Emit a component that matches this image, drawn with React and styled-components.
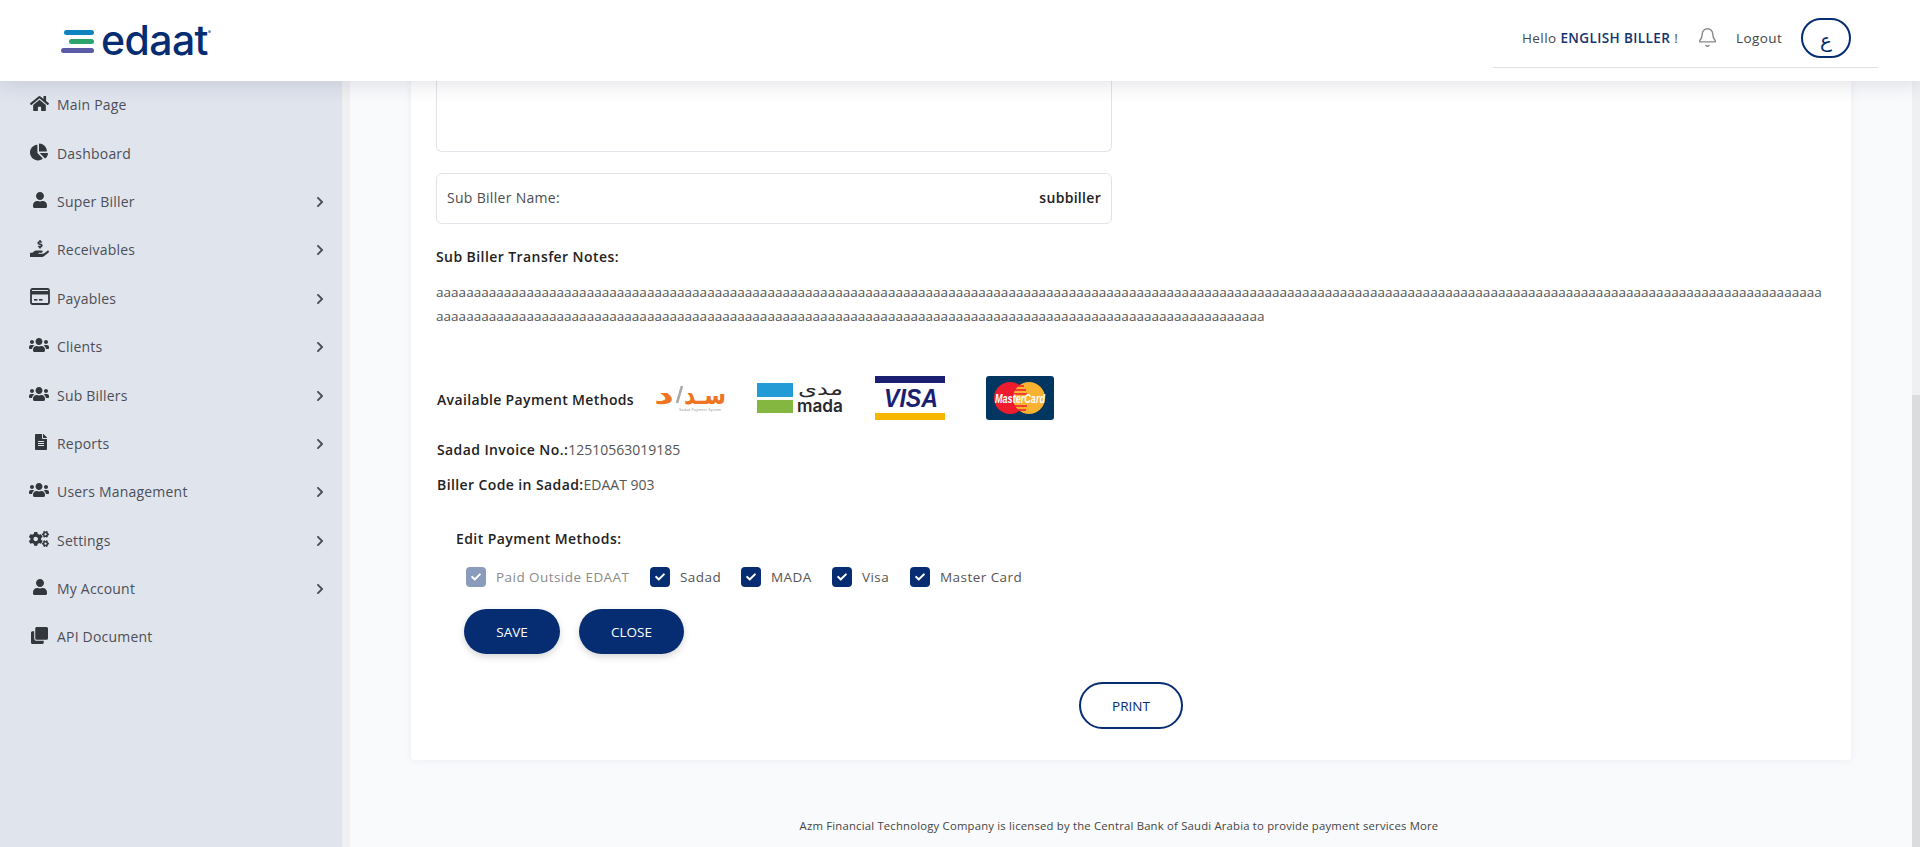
import React from "react";
import styled, { createGlobalStyle } from "styled-components";
import {
  FaHome, FaChartPie, FaUser, FaHandHoldingUsd, FaUsers, FaFileAlt, FaCogs, FaClone, FaChevronRight, FaCheck,
} from "react-icons/fa";
import { Bell } from "lucide-react";

const NAVY = "#062d72";
const FONT = '"Open Sans", "Noto Sans", sans-serif';

const Global = createGlobalStyle`
  html, body { margin: 0; padding: 0; overflow: hidden; background: #f9fafc; }
  * { box-sizing: border-box; }
  body { font-family: ${FONT}; font-size: 13.5px; color: #444; }
`;

const Page = styled.div`display: flex; flex-direction: column; width: 1920px; height: 847px; overflow: hidden;`;

const Header = styled.header`
  position: relative; z-index: 2; flex: 0 0 81px; height: 81px; background: #fff;
  box-shadow: 0 4px 18px rgba(40, 50, 80, 0.13);
  display: flex; justify-content: space-between;
`;
const LogoWrap = styled.div`display: flex; align-items: center; padding-left: 61px; height: 81px; gap: 4px; padding-bottom: 1px;`;
const LogoBars = styled.svg`width: 36px; height: 24px; display: block; margin-top: 3px;`;
const LogoWord = styled.span`
  font-family: "Inter", sans-serif; font-size: 41px; font-weight: 500; color: ${NAVY};
  line-height: 1; letter-spacing: -0.6px; position: relative;
`;
const Reg = styled.i`position: absolute; right: -3px; top: 10px; width: 3px; height: 3px; border-radius: 50%; background: #7a8fb5;`;
const UserBar = styled.div`
  width: 385px; height: 68px; margin-right: 42px; border-bottom: 1px solid #dedfe3;
  display: flex; align-items: center; padding-left: 29px; padding-top: 8px;
`;
const Hello = styled.span`color: #4a4a4a; letter-spacing: 0.4px; width: 176px; white-space: nowrap;`;
const HelloName = styled.b`color: #14336f; font-weight: 600;`;
const BellIcon = styled(Bell)`color: #888; margin-left: -1px; flex: none;`;
const LogoutLink = styled.span`margin-left: 18px; width: 48px; color: #444; letter-spacing: 0.4px;`;
const LangButton = styled.button`
  margin-left: 17px; width: 50px; height: 40px; border-radius: 20px; border: 2px solid ${NAVY};
  background: #fff; color: ${NAVY}; font-family: "DejaVu Sans", sans-serif; font-size: 20px; line-height: 1; padding: 4px 0 0; flex: none;
`;

const Body = styled.div`flex: 1; display: flex; min-height: 0;`;
const Sidebar = styled.nav`flex: 0 0 342px; background: #e0e4ed;`;
const SideRow = styled.div`
  height: 48.4px; display: flex; align-items: center; padding: 0 16px 0 30px; color: #4c4f57;
`;
const SideIcon = styled.span`
  flex: 0 0 27px; display: flex; justify-content: flex-start; font-size: ${(p) => p.$size || 19}px; color: #33363d;
  margin-top: -4px; svg { display: block; margin-left: ${(p) => p.$shift || 0}px; }
`;
const SideLabel = styled.span`flex: 1; letter-spacing: 0.2px; font-size: 14px; margin-top: -1px;`;
const SideChevron = styled(FaChevronRight)`font-size: 12px; color: #4c4f57;`;
const Track = styled.div`flex: 0 0 8px; background: #f0f0f2;`;
const MainTrack = styled(Track)`padding-top: 314px;`;
const Thumb = styled.div`height: 100%; background: #dcdcdc;`;

const Main = styled.main`flex: 1; display: flex; flex-direction: column; padding: 0 61px; background: #f9fafc; min-width: 0;`;
const Card = styled.section`
  height: 679px; background: #fff; border-radius: 0 0 4px 4px; padding: 0 25px;
  box-shadow: 0 0 8px rgba(60, 70, 100, 0.07);
`;
const EmptyBox = styled.div`width: 676px; height: 71px; border: 1px solid #e2e3e8; border-top: 0; border-radius: 0 0 6px 6px;`;
const NameBox = styled.div`
  width: 676px; height: 51px; margin-top: 21px; border: 1px solid #e2e3e8; border-radius: 6px;
  display: flex; justify-content: space-between; align-items: center; padding: 0 10px 2px;
`;
const NameLabel = styled.span`color: #4d4d4d; letter-spacing: 0.3px; font-size: 14px;`;
const NameValue = styled.b`color: #222; font-weight: 600; font-size: 14px; letter-spacing: 0.3px;`;
const Title = styled.div`height: 24px; line-height: 24px; margin-top: ${(p) => p.$top}px; padding-left: ${(p) => p.$left || 0}px; color: #222; font-weight: 600; font-size: 14px; letter-spacing: 0.42px;`;
const Notes = styled.p`margin: 11px 0 0; line-height: 24px; word-break: break-all; color: #555; letter-spacing: 0.03px;`;
const PayRow = styled.div`display: flex; align-items: center; height: 44px; margin-top: 48px; padding-left: 1px;`;
const PayLabel = styled.span`flex: 0 0 217px; color: #222; font-weight: 600; font-size: 14px; letter-spacing: 0.35px; margin-top: 2px;`;
const Slot = styled.span`display: block; margin-left: ${(p) => p.$gap || 0}px; line-height: 0; svg { overflow: visible; }`;
const Info = styled.div`height: 24px; line-height: 24px; margin-top: ${(p) => p.$top}px; padding-left: 1px; color: #555; font-size: 14px;`;
const InfoKey = styled.b`color: #222; font-weight: 600; font-size: 14px; letter-spacing: 0.4px;`;
const Checks = styled.div`display: flex; align-items: center; height: 20px; margin-top: 16px; padding-left: 30px;`;
const CheckItem = styled.label`display: flex; align-items: center; width: ${(p) => p.$w}px; color: ${(p) => (p.$off ? "#8a8a8a" : "#555")}; letter-spacing: 0.45px; white-space: nowrap;`;
const CheckBox = styled.span`
  flex: 0 0 20px; height: 20px; margin-right: 10px; border-radius: 4px; display: flex; align-items: center; justify-content: center;
  background: ${(p) => (p.$off ? "#8a9bbb" : NAVY)}; color: #fff; font-size: 10px;
`;
const Buttons = styled.div`display: flex; gap: 19px; margin-top: 22px; padding-left: 28px;`;
const Solid = styled.button`
  width: ${(p) => p.$w}px; height: 45px; border: 0; border-radius: 23px; background: ${NAVY}; color: #fff;
  font-family: ${FONT}; font-size: 13.5px; box-shadow: 0 3px 7px rgba(0, 0, 0, 0.16);
`;
const PrintRow = styled.div`display: flex; justify-content: center; margin-top: 28px;`;
const Outline = styled.button`
  width: 104px; height: 47px; border: 2px solid ${NAVY}; border-radius: 24px; background: #fff; color: ${NAVY};
  font-family: ${FONT}; font-size: 13.5px;
`;
const Footer = styled.footer`flex: 1; display: flex; align-items: flex-end; justify-content: center; padding: 0 24px 14px 0; font-size: 11.3px; color: #444; letter-spacing: 0.2px;`;

const CardIcon = () => (
  <svg width="20" height="17" viewBox="0 0 20 17">
    <rect x="1" y="1" width="18" height="15" rx="1.5" fill="none" stroke="currentColor" strokeWidth="1.8" />
    <rect x="1" y="3" width="18" height="3.5" fill="currentColor" />
    <rect x="4" y="11" width="3.5" height="1.6" fill="currentColor" />
    <rect x="9" y="11" width="3.5" height="1.6" fill="currentColor" />
  </svg>
);

const items = [
  [FaHome, "Main Page", false, 19],
  [FaChartPie, "Dashboard", false, 18],
  [FaUser, "Super Biller", true, 16, 2],
  [FaHandHoldingUsd, "Receivables", true, 19],
  [CardIcon, "Payables", true, 20, 0],
  [FaUsers, "Clients", true, 20, -1],
  [FaUsers, "Sub Billers", true, 20, -1],
  [FaFileAlt, "Reports", true, 16, 3],
  [FaUsers, "Users Management", true, 20, -1],
  [FaCogs, "Settings", true, 20, -1],
  [FaUser, "My Account", true, 16, 2],
  [FaClone, "API Document", false, 17, 1],
];

const SadadLogo = () => (
  <svg width="72" height="26" viewBox="0 0 72 26">
    <text x="72" y="19" textAnchor="end" fontFamily="DejaVu Sans" fontWeight="700" fontSize="26" fill="#ee7423" textLength="42" lengthAdjust="spacingAndGlyphs">سـد</text>
    <text x="0" y="19" fontFamily="DejaVu Sans" fontWeight="700" fontSize="26" fill="#ee7423" textLength="20" lengthAdjust="spacingAndGlyphs">د</text>
    <line x1="23" y1="18" x2="28" y2="1" stroke="#a9a9a9" strokeWidth="2.6" />
    <text x="46" y="25.5" textAnchor="middle" fontFamily="Liberation Sans" fontSize="3.5" fill="#999" textLength="42">Sadad Payment System</text>
  </svg>
);
const MadaLogo = () => (
  <svg width="86" height="30" viewBox="0 0 86 30">
    <rect x="0" y="0" width="36" height="14" fill="#259bd6" />
    <rect x="0" y="17" width="36" height="13" fill="#84b740" />
    <text x="41" y="12" fontFamily="DejaVu Sans" fontSize="17" fill="#27292d" textLength="45" lengthAdjust="spacingAndGlyphs">مدى</text>
    <text x="40" y="29" fontFamily="Inter" fontWeight="600" fontSize="17" fill="#27292d" textLength="46" lengthAdjust="spacingAndGlyphs">mada</text>
  </svg>
);
const VisaLogo = () => (
  <svg width="70" height="44" viewBox="0 0 70 44">
    <rect x="0" y="0" width="70" height="7" fill="#1a1f71" />
    <rect x="0" y="37" width="70" height="7" fill="#f7b600" />
    <text x="36" y="31" textAnchor="middle" fontFamily="Liberation Sans" fontStyle="italic" fontWeight="700" fontSize="26" fill="#1a1f71" textLength="54" lengthAdjust="spacingAndGlyphs">VISA</text>
  </svg>
);
const MasterLogo = () => (
  <svg width="68" height="44" viewBox="0 0 68 44">
    <rect width="68" height="44" rx="3" fill="#00365f" />
    <circle cx="24" cy="22" r="16" fill="#ee1c2e" />
    <circle cx="43" cy="22" r="16" fill="#fbb231" />
    <path d="M29 10h9M27 14h13M26 18h15M26 30h15M27 34h13" stroke="#ee1c2e" strokeWidth="1.6" />
    <text x="34" y="26.5" textAnchor="middle" fontFamily="Liberation Sans" fontStyle="italic" fontWeight="700" fontSize="13" fill="#fff" textLength="50" lengthAdjust="spacingAndGlyphs">MasterCard</text>
  </svg>
);

export default function App() {
  return (
    <Page>
      <Global />
      <Header>
        <LogoWrap>
          <LogoBars viewBox="0 0 36 24">
            <rect x="3" y="0" width="30" height="5" rx="2.5" fill="#0d84bf" />
            <rect x="8" y="9" width="25" height="5" rx="2.5" fill="#2ba36b" />
            <rect x="0" y="18" width="33" height="5" rx="2.5" fill="#5b5aa6" />
          </LogoBars>
          <LogoWord>edaat<Reg /></LogoWord>
        </LogoWrap>
        <UserBar>
          <Hello>Hello <HelloName>ENGLISH BILLER</HelloName> !</Hello>
          <BellIcon size={21} strokeWidth={1.6} />
          <LogoutLink>Logout</LogoutLink>
          <LangButton>ع</LangButton>
        </UserBar>
      </Header>
      <Body>
        <Sidebar>
          {items.map(([Icon, label, more, size, shift]) => (
            <SideRow key={label}>
              <SideIcon $size={size} $shift={shift}><Icon /></SideIcon>
              <SideLabel>{label}</SideLabel>
              {more && <SideChevron />}
            </SideRow>
          ))}
        </Sidebar>
        <Track />
        <Main>
          <Card>
            <EmptyBox />
            <NameBox>
              <NameLabel>Sub Biller Name:</NameLabel>
              <NameValue>subbiller</NameValue>
            </NameBox>
            <Title $top={21}>Sub Biller Transfer Notes:</Title>
            <Notes>{"a".repeat(294)}</Notes>
            <PayRow>
              <PayLabel>Available Payment Methods</PayLabel>
              <Slot><SadadLogo /></Slot>
              <Slot $gap={31}><MadaLogo /></Slot>
              <Slot $gap={32}><VisaLogo /></Slot>
              <Slot $gap={41}><MasterLogo /></Slot>
            </PayRow>
            <Info $top={18}><InfoKey>Sadad Invoice No.:</InfoKey>12510563019185</Info>
            <Info $top={11}><InfoKey>Biller Code in Sadad:</InfoKey>EDAAT 903</Info>
            <Title $top={30} $left={20}>Edit Payment Methods:</Title>
            <Checks>
              <CheckItem $w={184} $off><CheckBox $off><FaCheck /></CheckBox>Paid Outside EDAAT</CheckItem>
              <CheckItem $w={91}><CheckBox><FaCheck /></CheckBox>Sadad</CheckItem>
              <CheckItem $w={91}><CheckBox><FaCheck /></CheckBox>MADA</CheckItem>
              <CheckItem $w={78}><CheckBox><FaCheck /></CheckBox>Visa</CheckItem>
              <CheckItem $w={120}><CheckBox><FaCheck /></CheckBox>Master Card</CheckItem>
            </Checks>
            <Buttons>
              <Solid $w={96}>SAVE</Solid>
              <Solid $w={105}>CLOSE</Solid>
            </Buttons>
            <PrintRow><Outline>PRINT</Outline></PrintRow>
          </Card>
          <Footer>Azm Financial Technology Company is licensed by the Central Bank of Saudi Arabia to provide payment services More</Footer>
        </Main>
        <MainTrack><Thumb /></MainTrack>
      </Body>
    </Page>
  );
}
